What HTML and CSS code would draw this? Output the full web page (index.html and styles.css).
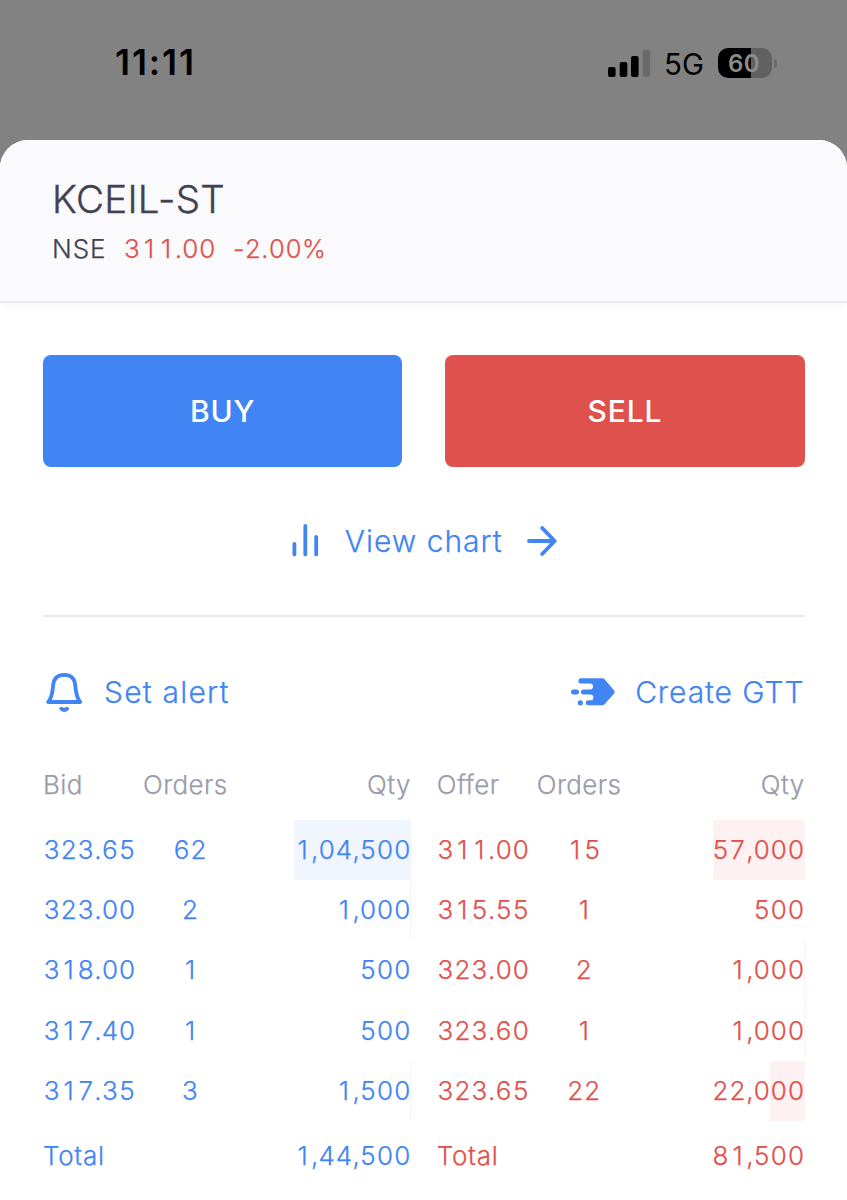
FILE: index.html
```html
<!DOCTYPE html>
<html lang="en">
<head>
    <meta charset="utf-8">
    <title>KCEIL-ST</title>
    <link rel="stylesheet" href="styles.css">
    <script src="digits.js" defer></script>
</head>
<body>
<div class="status">
    <span class="time">11:11</span>
    <div class="status-right">
        <svg class="signal" width="43" height="27" viewBox="0 0 43 27">
            <rect x="0" y="17" width="7.6" height="10" rx="2"/>
            <rect x="11.7" y="12" width="7.6" height="15" rx="2"/>
            <rect x="23" y="6" width="7.6" height="21" rx="2"/>
            <rect class="off" x="34.6" y="0" width="7.6" height="27" rx="2"/>
        </svg>
        <span class="net">5G</span>
        <div class="battery"><span>60</span></div>
        <i class="nub"></i>
    </div>
</div>
<div class="sheet">
    <div class="head">
        <h1>KCEIL-ST</h1>
        <p><span class="exch">NSE</span><span class="price num">311.00</span><span class="change num">-2.00%</span></p>
    </div>
    <div class="content">
        <div class="buttons">
            <a class="btn buy" href="#">BUY</a>
            <a class="btn sell" href="#">SELL</a>
        </div>
        <a class="chart" href="#">
            <svg width="28" height="34" viewBox="0 0 28 34" fill="none" stroke="#4184f3" stroke-width="3.8" stroke-linecap="round">
                <path d="M2.4 20v10.400M13.300 2v28.400M24.200 13v17.400"/>
            </svg>
            <span>View chart</span>
            <svg width="30" height="30" viewBox="0 0 30 30" fill="none" stroke="#4184f3" stroke-width="3.8" stroke-linecap="round" stroke-linejoin="round">
                <path d="M2 15h25.500M15.200 2L27.700 15L15.200 28"/>
            </svg>
        </a>
        <div class="actions">
            <a class="alert" href="#">
                <svg width="37" height="42" viewBox="0 0 37 42" fill="none" stroke="#4184f3" stroke-width="3.8" stroke-linecap="round" stroke-linejoin="round">
                    <path d="M2.200 31H34.200C30.700 27.500 29.900 22 29.200 14C28.600 7.500 24.700 3.800 18.200 3.800S7.800 7.500 7.200 14C6.500 22 5.700 27.500 2.200 31Z"/>
                    <path d="M15.300 37.700Q18.200 40.500 21.100 37.700"/>
                </svg>
                <span>Set alert</span>
            </a>
            <a class="gtt" href="#">
                <svg width="45" height="28" viewBox="0 0 45 28" fill="#4184f3">
                    <path d="M10 .3H31.500Q32.800 .3 33.600 1.200L43.200 12.500Q44.300 14 43.200 15.500L33.600 26.300Q32.800 27.300 31.500 27.300H17.300A2.500 2.500 0 0 1 17.300 22.300H19.500A2.900 2.900 0 0 0 19.500 16.500H12.500A2.500 2.500 0 0 1 12.500 11.500H19A3 3 0 0 0 19 5.500H10A2.600 2.600 0 0 1 10 .3Z"/>
                    <rect x="0" y="11.500" width="8" height="5" rx="2.500"/>
                    <circle cx="9.300" cy="24.800" r="2.600"/>
                </svg>
                <span>Create GTT</span>
            </a>
        </div>
        <div class="depth">
            <div class="side bid">
                <div class="row th"><span>Bid</span><span>Orders</span><span>Qty</span></div>
                <div class="row"><i class="bar" style="width:117px"></i><span class="num">323.65</span><span class="num">62</span><span class="num">1,04,500</span></div>
                <div class="row"><i class="bar" style="width:1px"></i><span class="num">323.00</span><span class="num">2</span><span class="num">1,000</span></div>
                <div class="row"><span class="num">318.00</span><span class="num">1</span><span class="num">500</span></div>
                <div class="row"><span class="num">317.40</span><span class="num">1</span><span class="num">500</span></div>
                <div class="row"><i class="bar" style="width:1px"></i><span class="num">317.35</span><span class="num">3</span><span class="num">1,500</span></div>
                <div class="row total"><span>Total</span><span></span><span class="num">1,44,500</span></div>
            </div>
            <div class="side offer">
                <div class="row th"><span>Offer</span><span>Orders</span><span>Qty</span></div>
                <div class="row"><i class="bar" style="width:92px"></i><span class="num">311.00</span><span class="num">15</span><span class="num">57,000</span></div>
                <div class="row"><span class="num">315.55</span><span class="num">1</span><span class="num">500</span></div>
                <div class="row"><i class="bar" style="width:1px"></i><span class="num">323.00</span><span class="num">2</span><span class="num">1,000</span></div>
                <div class="row"><i class="bar" style="width:1px"></i><span class="num">323.60</span><span class="num">1</span><span class="num">1,000</span></div>
                <div class="row"><i class="bar" style="width:35px"></i><span class="num">323.65</span><span class="num">22</span><span class="num">22,000</span></div>
                <div class="row total"><span>Total</span><span></span><span class="num">81,500</span></div>
            </div>
        </div>
    </div>
</div>
</body>
</html>
```
FILE: styles.css
```css
*{margin:0;padding:0;box-sizing:border-box;}
body{width:847px;height:1200px;overflow:hidden;background:#828282;font:300 26px/1 Inter,sans-serif;color:#424152;}
a{text-decoration:none;color:#4184f3;}
svg{display:block;flex:none;}
.status{height:139.5px;display:flex;justify-content:space-between;padding:44px 70px 0 115px;color:#000;}
.time{font-weight:600;font-size:35.5px;line-height:38px;letter-spacing:1.9px;}
.status-right{display:flex;height:38px;align-items:center;}
.signal .off{fill:#6a6a6a;}
.net{font-weight:400;font-size:29.5px;margin:3px 14px 0 13px;}
.battery{width:54px;height:30px;border-radius:10px;background:linear-gradient(90deg,#000 33px,#616161 33px);color:#8c8c8c;text-align:center;}
.battery span{display:block;font-weight:600;font-size:24px;line-height:31px;margin-left:-2px;letter-spacing:.5px;}
.nub{width:3px;height:9px;margin-left:2px;border-radius:0 5px 5px 0;background:#6a6a6a;}
.sheet{height:1061px;background:#fff;border-radius:28px 28px 0 0;overflow:hidden;-webkit-text-stroke:.25px currentColor;}
.head{height:163.5px;padding:38.5px 52px 0;background:#fafafc;border-bottom:2px solid #ebebee;box-shadow:0 2px 12px rgba(0,0,0,.04);}
h1{font-weight:300;font-size:38.5px;line-height:43px;letter-spacing:.3px;-webkit-text-stroke-width:.4px;}
.head p{display:flex;line-height:30px;margin-top:13px;letter-spacing:.9px;}
.price,.change{color:#df514c;}
.price{margin:0 17px;}
.change{letter-spacing:0;font-size:25.5px;}
.change.num b{width:16.8px;}
.content{padding:52px 42.5px 0 43px;}
.buttons{display:flex;gap:43px;}
.btn{flex:1;height:112px;border-radius:8px;font-weight:500;font-size:30px;line-height:113px;text-align:center;letter-spacing:.8px;color:#fff;-webkit-text-stroke-width:0;}
.buy{background:#4184f3;}
.sell{background:#df514c;}
.chart{display:flex;justify-content:center;align-items:center;height:149.5px;padding:1px 0 0 1px;border-bottom:2px solid #ebebeb;font-size:30px;letter-spacing:1px;}
.chart span{margin:0 24px 0 25px;}
.actions{display:flex;justify-content:space-between;align-items:center;height:149.5px;padding-top:1px;font-size:30px;letter-spacing:1px;}
.alert,.gtt{display:flex;align-items:center;}
.alert{padding-left:3px;letter-spacing:1.2px;}
.alert span{margin-left:21px;}
.gtt span{margin-left:19px;}
.gtt{letter-spacing:.9px;}
.depth{display:flex;gap:26px;letter-spacing:.5px;}
.side{flex:1;}
.row{position:relative;display:grid;grid-template-columns:100px 94px 1fr;height:60.4px;line-height:59.6px;white-space:nowrap;}
.row span{position:relative;}
.row > span:nth-of-type(2){text-align:center;}
.row > span:nth-of-type(3){text-align:right;}
.row.th{height:53.5px;line-height:37px;letter-spacing:.4px;}
.th > span:nth-of-type(2){text-align:left;}
.bar{position:absolute;top:0;right:0;bottom:0;}
.bid{color:#4184f3;}
.offer{color:#df514c;}
.bid .bar{background:#f0f5fe;}
.offer .bar{background:#fdf1f1;}
.bid .th,.offer .th{color:#9b9baa;}
.total{padding-top:4.5px;letter-spacing:.7px;}
/* fixed-width digits that keep the plain "1" */
.num b{display:inline-block;width:17.1px;font-weight:inherit;text-align:center;letter-spacing:0;}
.num u{display:inline-block;width:7.1px;text-decoration:none;text-align:center;letter-spacing:0;}
```
FILE: digits.js
```js
var aNum = document.querySelectorAll(".num");
for (var i = 0; i < aNum.length; i++){
    aNum[i].innerHTML = aNum[i].innerHTML.replace(/(\d)|([.,])/g, function (m, d)
    {
        return d ? "<b>" + d + "</b>" : "<u>" + m + "</u>";
    });
}
```
